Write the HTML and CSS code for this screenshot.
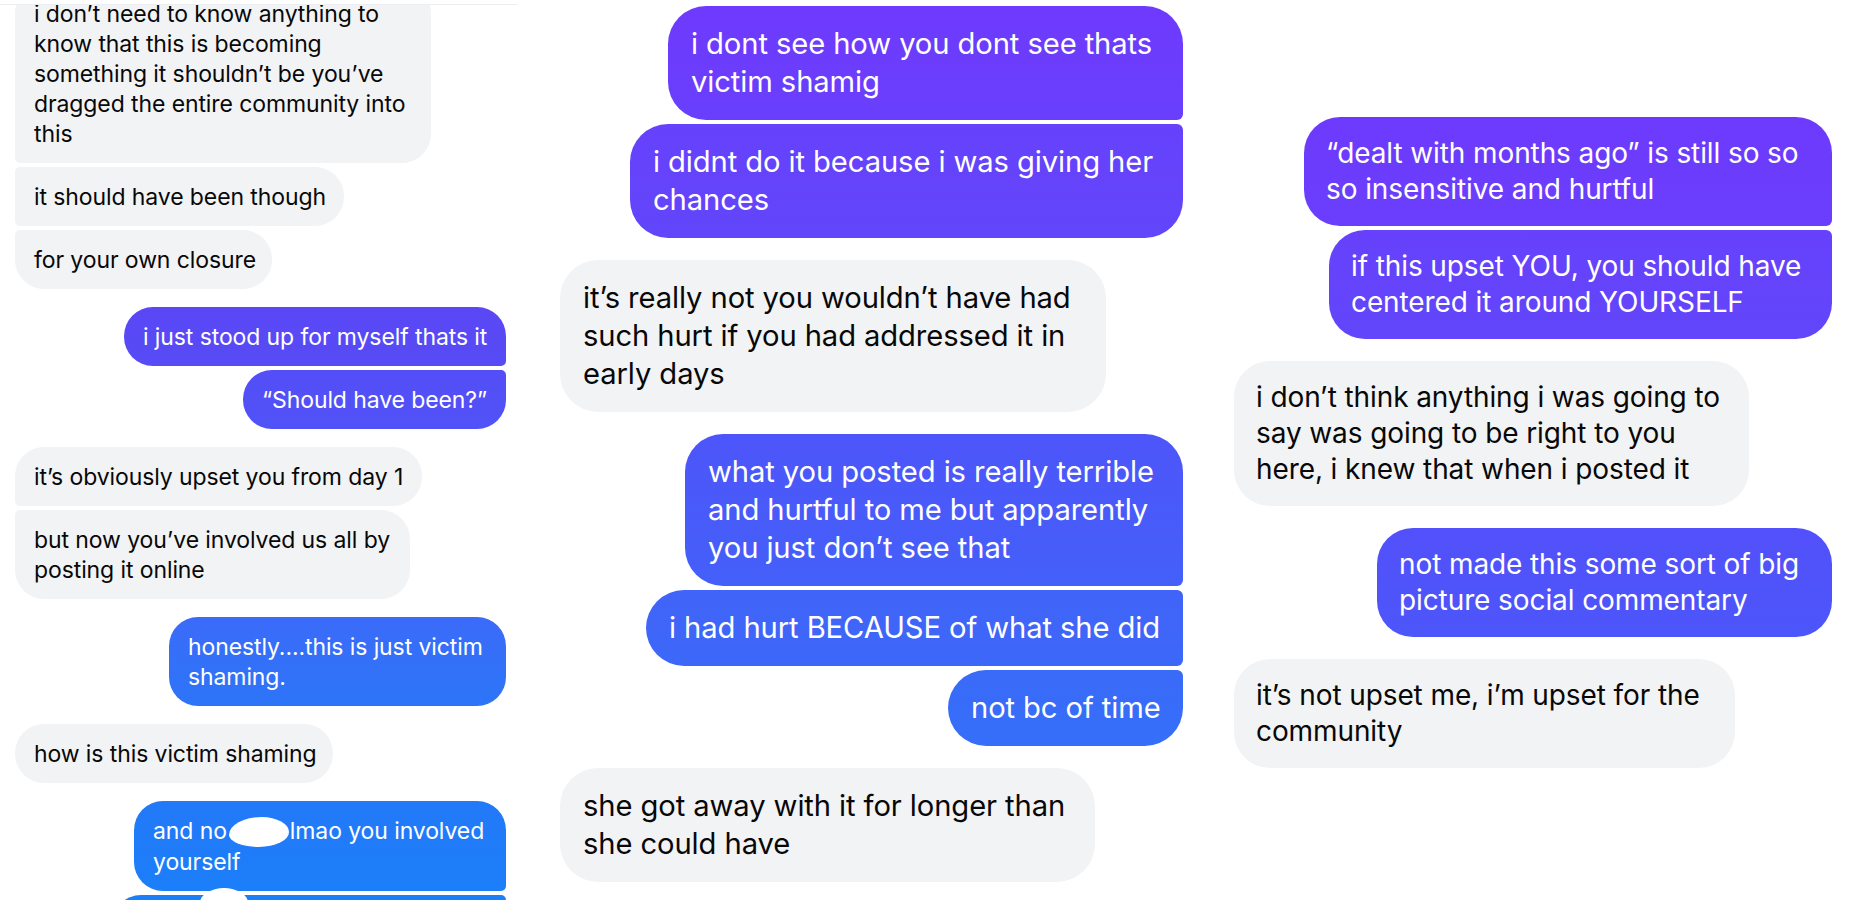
FILE: index.html
```html
<!DOCTYPE html>
<html lang="en">
<head>
<meta charset="utf-8">
<title>Messages</title>
<link rel="stylesheet" href="styles.css">
</head>
<body>
<main class="board">

  <section class="col col1">
    <div class="shot">
      <div class="thread">
        <div class="group them-group">
          <div class="bubble them c1b1">i don’t need to know anything to<br>know that this is becoming<br>something it shouldn’t be you’ve<br>dragged the entire community into<br>this</div>
          <div class="bubble them c1b2">it should have been though</div>
          <div class="bubble them c1b3">for your own closure</div>
        </div>
        <div class="group me-group">
          <div class="bubble me t-c1a c1b4">i just stood up for myself thats it</div>
          <div class="bubble me t-c1b c1b5">“Should have been?”</div>
        </div>
        <div class="group them-group">
          <div class="bubble them c1b6">it’s obviously upset you from day 1</div>
          <div class="bubble them c1b7">but now you’ve involved us all by<br>posting it online</div>
        </div>
        <div class="group me-group">
          <div class="bubble me t-c1c c1b8">honestly....this is just victim<br>shaming.</div>
        </div>
        <div class="group them-group">
          <div class="bubble them c1b9">how is this victim shaming</div>
        </div>
        <div class="group me-group">
          <div class="bubble me t-c1d c1b10">and no<span class="redact"></span>lmao you involved<br>yourself</div>
          <div class="bubble me t-c1e c1b11 cut"></div>
        </div>
      </div>
    </div>
  </section>

  <section class="col col2">
    <div class="thread">
      <div class="group me-group">
        <div class="bubble me t-c2a c2b1">i dont see how you dont see thats<br>victim shamig</div>
        <div class="bubble me t-c2b c2b2">i didnt do it because i was giving her<br>chances</div>
      </div>
      <div class="group them-group">
        <div class="bubble them c2b3">it’s really not you wouldn’t have had<br>such hurt if you had addressed it in<br>early days</div>
      </div>
      <div class="group me-group">
        <div class="bubble me t-c2c c2b4">what you posted is really terrible<br>and hurtful to me but apparently<br>you just don’t see that</div>
        <div class="bubble me t-c2d c2b5">i had hurt BECAUSE of what she did</div>
        <div class="bubble me t-c2e c2b6">not bc of time</div>
      </div>
      <div class="group them-group">
        <div class="bubble them c2b7">she got away with it for longer than<br>she could have</div>
      </div>
    </div>
  </section>

  <section class="col col3">
    <div class="thread">
      <div class="group me-group">
        <div class="bubble me t-c3a c3b1">“dealt with months ago” is still so so<br>so insensitive and hurtful</div>
        <div class="bubble me t-c3b c3b2">if this upset YOU, you should have<br>centered it around YOURSELF</div>
      </div>
      <div class="group them-group">
        <div class="bubble them c3b3">i don’t think anything i was going to<br>say was going to be right to you<br>here, i knew that when i posted it</div>
      </div>
      <div class="group me-group">
        <div class="bubble me t-c3c c3b4">not made this some sort of big<br>picture social commentary</div>
      </div>
      <div class="group them-group">
        <div class="bubble them c3b5">it’s not upset me, i’m upset for the<br>community</div>
      </div>
    </div>
  </section>

</main>
</body>
</html>
```

FILE: styles.css
```css
html, body {
  margin: 0;
  padding: 0;
  background: #ffffff;
}

body {
  font-family: Inter, "Noto Sans", "Liberation Sans", sans-serif;
  height: 900px;
  overflow: hidden;
}

.board {
  display: flex;
  height: 900px;
}

.col {
  box-sizing: border-box;
  flex: none;
}

/* ---------- column 1 (small screenshot) ---------- */
.col1 {
  width: 520px;
  padding-top: 4px;
  --r: 29px;
  --s: 5px;
  font-size: 23px;
  line-height: 30px;
}

.shot {
  width: 518px;
  height: 895px;
  border-top: 1px solid #eceef1;
  overflow: hidden;
}

.col1 .thread {
  margin-top: -21px;
  padding: 0 12px 0 15px;
  gap: 18px;
}

.col1 .bubble {
  padding: 14.5px 19px;
}

/* ---------- column 2 ---------- */
.col2 {
  width: 680px;
  padding: 6px 17px 0 40px;
  --r: 38px;
  --s: 6px;
  font-size: 29.2px;
  line-height: 38px;
}

.col2 .thread {
  gap: 22px;
}

.col2 .bubble {
  padding: 18.5px 23px 19.5px;
}

/* ---------- column 3 ---------- */
.col3 {
  width: 657px;
  padding: 117px 25px 0 34px;
  --r: 36px;
  --s: 6px;
  font-size: 28px;
  line-height: 36px;
}

.col3 .thread {
  gap: 22px;
}

.col3 .bubble {
  padding: 18px 22px 19px;
}

/* ---------- threads & groups ---------- */
.thread {
  display: flex;
  flex-direction: column;
}

.group {
  display: flex;
  flex-direction: column;
  gap: 4px;
}

.me-group {
  align-items: flex-end;
}

.them-group {
  align-items: flex-start;
}

.bubble {
  box-sizing: border-box;
  white-space: nowrap;
  letter-spacing: -0.1px;
}

.them {
  background: #f2f3f5;
  color: #080808;
  border-radius: var(--s) var(--r) var(--r) var(--s);
}

.them-group .bubble:first-child {
  border-top-left-radius: var(--r);
}

.them-group .bubble:last-child {
  border-bottom-left-radius: var(--r);
}

.me {
  color: #ffffff;
  background: linear-gradient(180deg, var(--c1), var(--c2));
  border-radius: var(--r) var(--s) var(--s) var(--r);
}

.me-group .bubble:first-child {
  border-top-right-radius: var(--r);
}

.me-group .bubble:last-child {
  border-bottom-right-radius: var(--r);
}

/* gradient tones, by position on screen */
.t-c1a { --c1: #5a47f5; --c2: #564cf6; }
.t-c1b { --c1: #544ef7; --c2: #5052f7; }
.t-c1c { --c1: #3b6bf8; --c2: #2c75f8; }
.t-c1d { --c1: #2379f8; --c2: #1c7ef9; }
.t-c1e { --c1: #1a7ff9; --c2: #1a80f9; }

.t-c2a { --c1: #6e3afd; --c2: #693ffc; }
.t-c2b { --c1: #6741fc; --c2: #6146fb; }
.t-c2c { --c1: #4d55fa; --c2: #4460f9; }
.t-c2d { --c1: #4163f9; --c2: #3c68f8; }
.t-c2e { --c1: #3a6af8; --c2: #356ff8; }

.t-c3a { --c1: #6d3afd; --c2: #6a3efc; }
.t-c3b { --c1: #6741fc; --c2: #6146fb; }
.t-c3c { --c1: #5350fa; --c2: #4c56fa; }

/* bubble widths (taken from the wrapped text layout) */
.c1b1 { width: 416px; }
.c1b2 { width: 329px; }
.c1b3 { width: 257px; }
.c1b4 { width: 382px; }
.c1b5 { width: 263px; }
.c1b6 { width: 407px; }
.c1b7 { width: 395px; }
.c1b8 { width: 337px; }
.c1b9 { width: 318px; }
.c1b10 { width: 372px; }
.c1b11 { width: 394px; height: 89px; }

.c2b1 { width: 515px; }
.c2b2 { width: 553px; }
.c2b3 { width: 546px; }
.c2b4 { width: 498px; }
.c2b5 { width: 537px; }
.c2b6 { width: 235px; }
.c2b7 { width: 535px; }

.c3b1 { width: 528px; }
.c3b2 { width: 503px; }
.c3b3 { width: 515px; }
.c3b4 { width: 455px; }
.c3b5 { width: 501px; }

/* scribbled-out name */
.redact {
  display: inline-block;
  width: 60px;
  height: 30px;
  margin: 0 1px 0 2px;
  vertical-align: -8px;
  background: #ffffff;
  border-radius: 55% 45% 50% 50% / 60% 50% 50% 40%;
}

.cut {
  position: relative;
}

.cut::before {
  content: "";
  position: absolute;
  left: 88px;
  top: -7px;
  width: 48px;
  height: 30px;
  background: #ffffff;
  border-radius: 50%;
}
```
